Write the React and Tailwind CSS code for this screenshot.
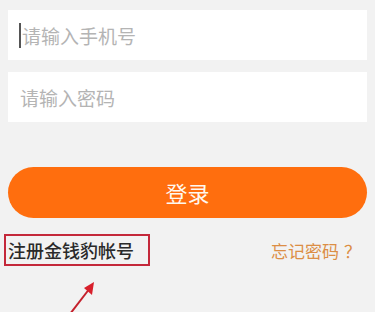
export default function App() {
  const font = { fontFamily: '"Noto Sans CJK SC", "Noto Sans", sans-serif' };

  return (
    <div className="relative w-[375px] h-[312px] overflow-hidden bg-[#f2f2f2] px-2 pt-[10px]" style={font}>
      {/* Phone input */}
      <div className="h-[50px] bg-white flex items-center pl-[11px]">
        <span className="w-[2px] h-[25px] bg-[#555] mr-[1px]" />
        <span className="text-[19px] text-[#b4b4b4] leading-none">请输入手机号</span>
      </div>

      {/* Password input */}
      <div className="mt-[12px] h-[50px] bg-white flex items-center pl-[12px]">
        <span className="text-[19px] text-[#b4b4b4] leading-none">请输入密码</span>
      </div>

      {/* Login button */}
      <button className="mt-[45px] w-full h-[51px] rounded-full bg-[#ff6e0e] text-[#fff8ef] text-[22px] flex items-center justify-center">
        登录
      </button>

      {/* Links row */}
      <div className="mt-[16px] flex items-center justify-between">
        <span className="-ml-1 h-[32px] border-2 border-[#c4283a] pl-[2px] pr-[14px] flex items-center text-[18px] font-medium text-[#2a2a2a] leading-none">
          注册金钱豹帐号
        </span>
        <span className="mr-[6px] flex items-center text-[17px] text-[#dc8e45] leading-none">
          忘记密码<span className="ml-[5px]">？</span>
        </span>
      </div>

      {/* annotation arrow */}
      <svg className="absolute left-[60px] top-[276px]" width="44" height="36" viewBox="0 0 44 36">
        <line x1="10" y1="38" x2="30" y2="12" stroke="#c4202c" strokeWidth="2" />
        <polygon points="34,6 24,12 32,19" fill="#d8202c" />
      </svg>
    </div>
  );
}
